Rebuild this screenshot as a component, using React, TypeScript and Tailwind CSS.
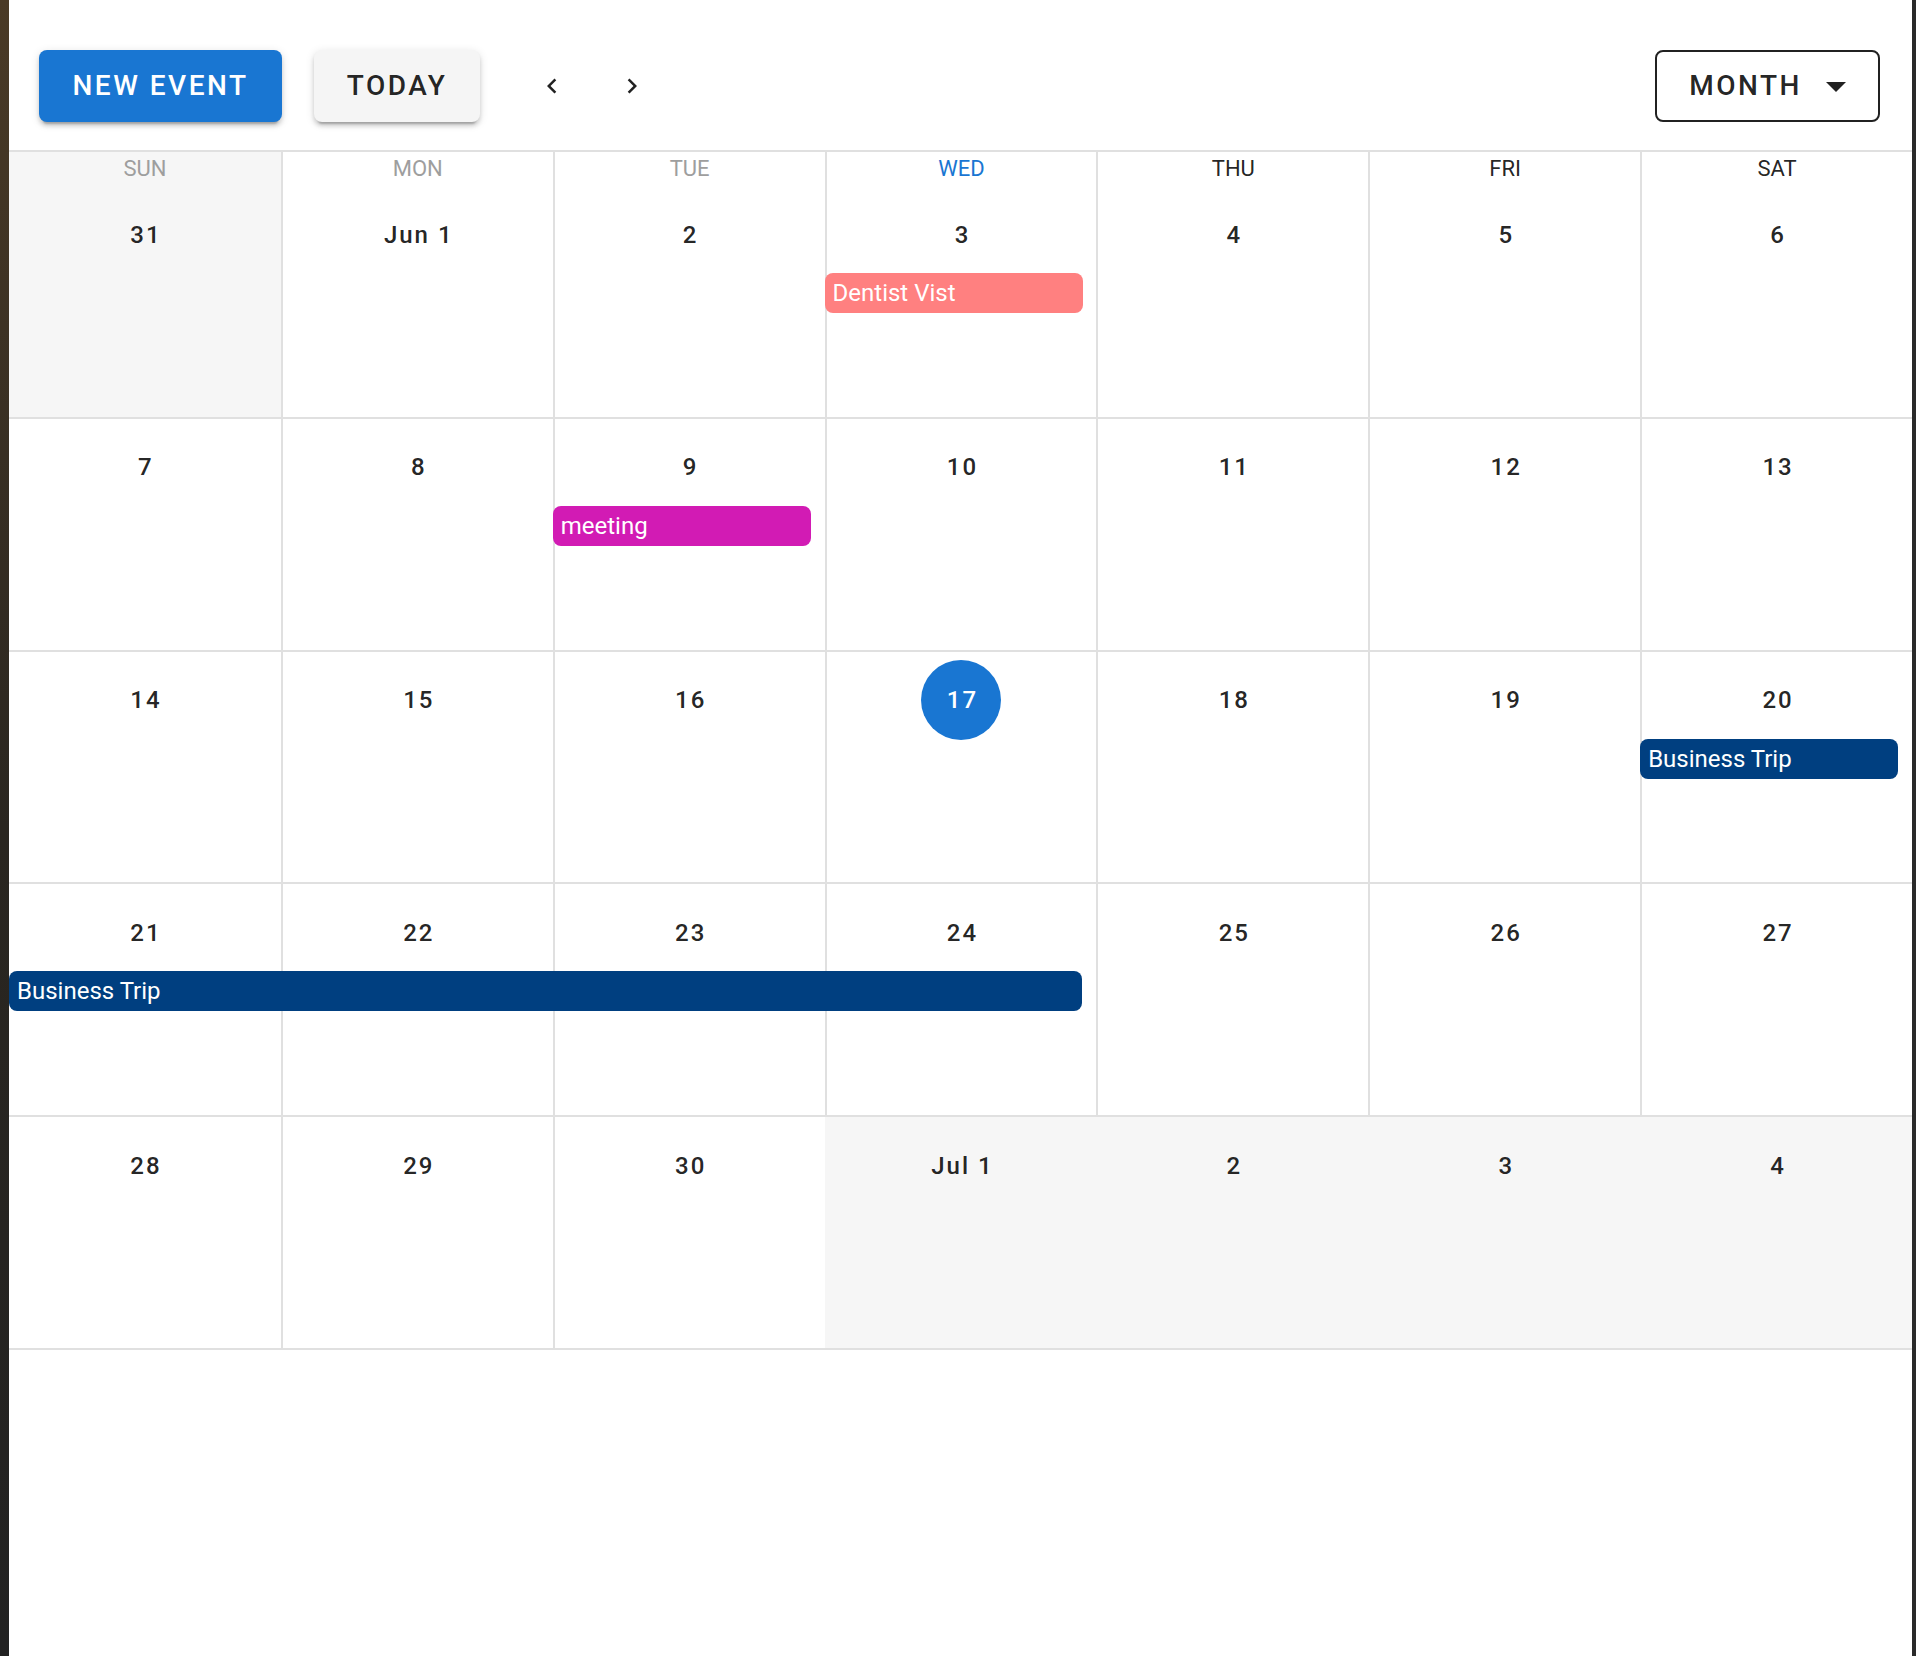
import React from 'react';

type Day = { label: string; outside?: boolean; today?: boolean };
type CalEvent = { name: string; col: number; span: number; color: string };

const weekdays = [
  { name: 'Sun', tone: 'past' },
  { name: 'Mon', tone: 'past' },
  { name: 'Tue', tone: 'past' },
  { name: 'Wed', tone: 'today' },
  { name: 'Thu', tone: 'future' },
  { name: 'Fri', tone: 'future' },
  { name: 'Sat', tone: 'future' },
];

const weeks: { days: Day[]; events: CalEvent[] }[] = [
  {
    days: [
      { label: '31', outside: true },
      { label: 'Jun 1' },
      { label: '2' },
      { label: '3' },
      { label: '4' },
      { label: '5' },
      { label: '6' },
    ],
    events: [{ name: 'Dentist Vist', col: 3, span: 1, color: 'bg-[#ff8080]' }],
  },
  {
    days: ['7', '8', '9', '10', '11', '12', '13'].map((label) => ({ label })),
    events: [{ name: 'meeting', col: 2, span: 1, color: 'bg-[#d21bb4]' }],
  },
  {
    days: [
      { label: '14' },
      { label: '15' },
      { label: '16' },
      { label: '17', today: true },
      { label: '18' },
      { label: '19' },
      { label: '20' },
    ],
    events: [{ name: 'Business Trip', col: 6, span: 1, color: 'bg-[#003f80]' }],
  },
  {
    days: ['21', '22', '23', '24', '25', '26', '27'].map((label) => ({ label })),
    events: [{ name: 'Business Trip', col: 0, span: 4, color: 'bg-[#003f80]' }],
  },
  {
    days: [
      { label: '28' },
      { label: '29' },
      { label: '30' },
      { label: 'Jul 1', outside: true },
      { label: '2', outside: true },
      { label: '3', outside: true },
      { label: '4', outside: true },
    ],
    events: [],
  },
];

const colStart = ['col-start-1', 'col-start-2', 'col-start-3', 'col-start-4', 'col-start-5', 'col-start-6', 'col-start-7'];
const colSpan = ['', 'col-span-1', 'col-span-2', 'col-span-3', 'col-span-4'];

const raised =
  'shadow-[0_6px_2px_-4px_rgba(0,0,0,0.2),0_4px_4px_0_rgba(0,0,0,0.14),0_2px_10px_0_rgba(0,0,0,0.12)]';

function Chevron({ dir }: { dir: 'left' | 'right' }) {
  return (
    <svg width="30" height="30" viewBox="0 0 24 24" className="fill-[#000000de]">
      {dir === 'left' ? (
        <path d="M15.41,16.58L10.83,12L15.41,7.41L14,6L8,12L14,18L15.41,16.58Z" />
      ) : (
        <path d="M8.59,16.58L13.17,12L8.59,7.41L10,6L16,12L10,18L8.59,16.58Z" />
      )}
    </svg>
  );
}

export default function App() {
  return (
    <div className="flex min-h-[1656px] w-[1916px] font-['Roboto',sans-serif]">
      {/* desktop edge */}
      <div className="w-[9px] shrink-0 bg-gradient-to-b from-[#4a3a26] via-[#2a2620] to-[#222222]" />

      <div className="flex-1 bg-white">
        {/* Toolbar */}
        <div className="flex items-center pl-[30px] pr-[32px] pt-[50px] mb-[28px] h-[122px]">
          <button
            className={`w-[243px] h-[72px] rounded-[8px] bg-[#1976d2] text-white text-[28px] font-medium uppercase tracking-[2.5px] ${raised}`}
          >
            New Event
          </button>
          <button
            className={`ml-[32px] w-[166px] h-[72px] rounded-[8px] bg-[#f5f5f5] text-[#000000de] text-[28px] font-medium uppercase tracking-[2.5px] ${raised}`}
          >
            Today
          </button>
          <button className="ml-[32px] w-[80px] h-[80px] rounded-full flex items-center justify-center">
            <Chevron dir="left" />
          </button>
          <button className="w-[80px] h-[80px] rounded-full flex items-center justify-center">
            <Chevron dir="right" />
          </button>
          <div className="flex-1" />
          <button className="w-[225px] h-[72px] rounded-[8px] border-2 border-[#000000de] text-[#000000de] text-[28px] font-medium uppercase tracking-[2.5px] flex items-center justify-center pl-[14px]">
            <span>Month</span>
            <svg width="48" height="48" viewBox="0 0 24 24" className="ml-[10px] fill-[#000000de]">
              <path d="M7,10L12,15L17,10H7Z" />
            </svg>
          </button>
        </div>

        {/* Calendar */}
        <div className="border-t-2 border-[#e0e0e0]">
          <div className="grid grid-cols-7 h-[34px]">
            {weekdays.map((w, i) => (
              <div
                key={w.name}
                className={`text-center text-[22px] leading-[34px] uppercase ${i > 0 ? 'border-l-2 border-[#e0e0e0]' : 'bg-[#f6f6f6]'} ${
                  w.tone === 'past' ? 'text-[#9e9e9e]' : w.tone === 'today' ? 'text-[#1976d2]' : 'text-[#000000de]'
                }`}
              >
                {w.name}
              </div>
            ))}
          </div>

          {weeks.map((week, wi) => (
            <div key={wi} className="grid grid-cols-7 h-[232.8px] border-b-2 border-[#e0e0e0]">
              {week.days.map((d, di) => (
                <div
                  key={di}
                  className={`row-start-1 ${colStart[di]} flex justify-center ${
                    di > 0 ? (d.outside ? 'border-l-2 border-[#f6f6f6]' : 'border-l-2 border-[#e0e0e0]') : ''
                  } ${d.outside ? 'bg-[#f6f6f6]' : 'bg-white'}`}
                >
                  <div
                    className={`mt-[8.5px] w-[80px] h-[80px] rounded-full flex items-center justify-center pl-[2px] text-[24px] font-medium tracking-[2px] whitespace-pre ${
                      d.today ? 'bg-[#1976d2] text-white' : 'text-[#000000de]'
                    }`}
                  >
                    {d.label}
                  </div>
                </div>
              ))}
              {week.events.map((e, ei) => (
                <div
                  key={ei}
                  className={`row-start-1 ${colStart[e.col]} ${colSpan[e.span]} self-start mt-[87px] h-[40px] rounded-[8px] ${e.color} text-white text-[24px] leading-[40px] pl-[8px] ${
                    e.span === 1 ? 'w-[95%]' : 'mr-[14px]'
                  }`}
                >
                  {e.name}
                </div>
              ))}
            </div>
          ))}
        </div>
      </div>

      <div className="w-[4px] shrink-0 bg-[#2a2a2a]" />
    </div>
  );
}
